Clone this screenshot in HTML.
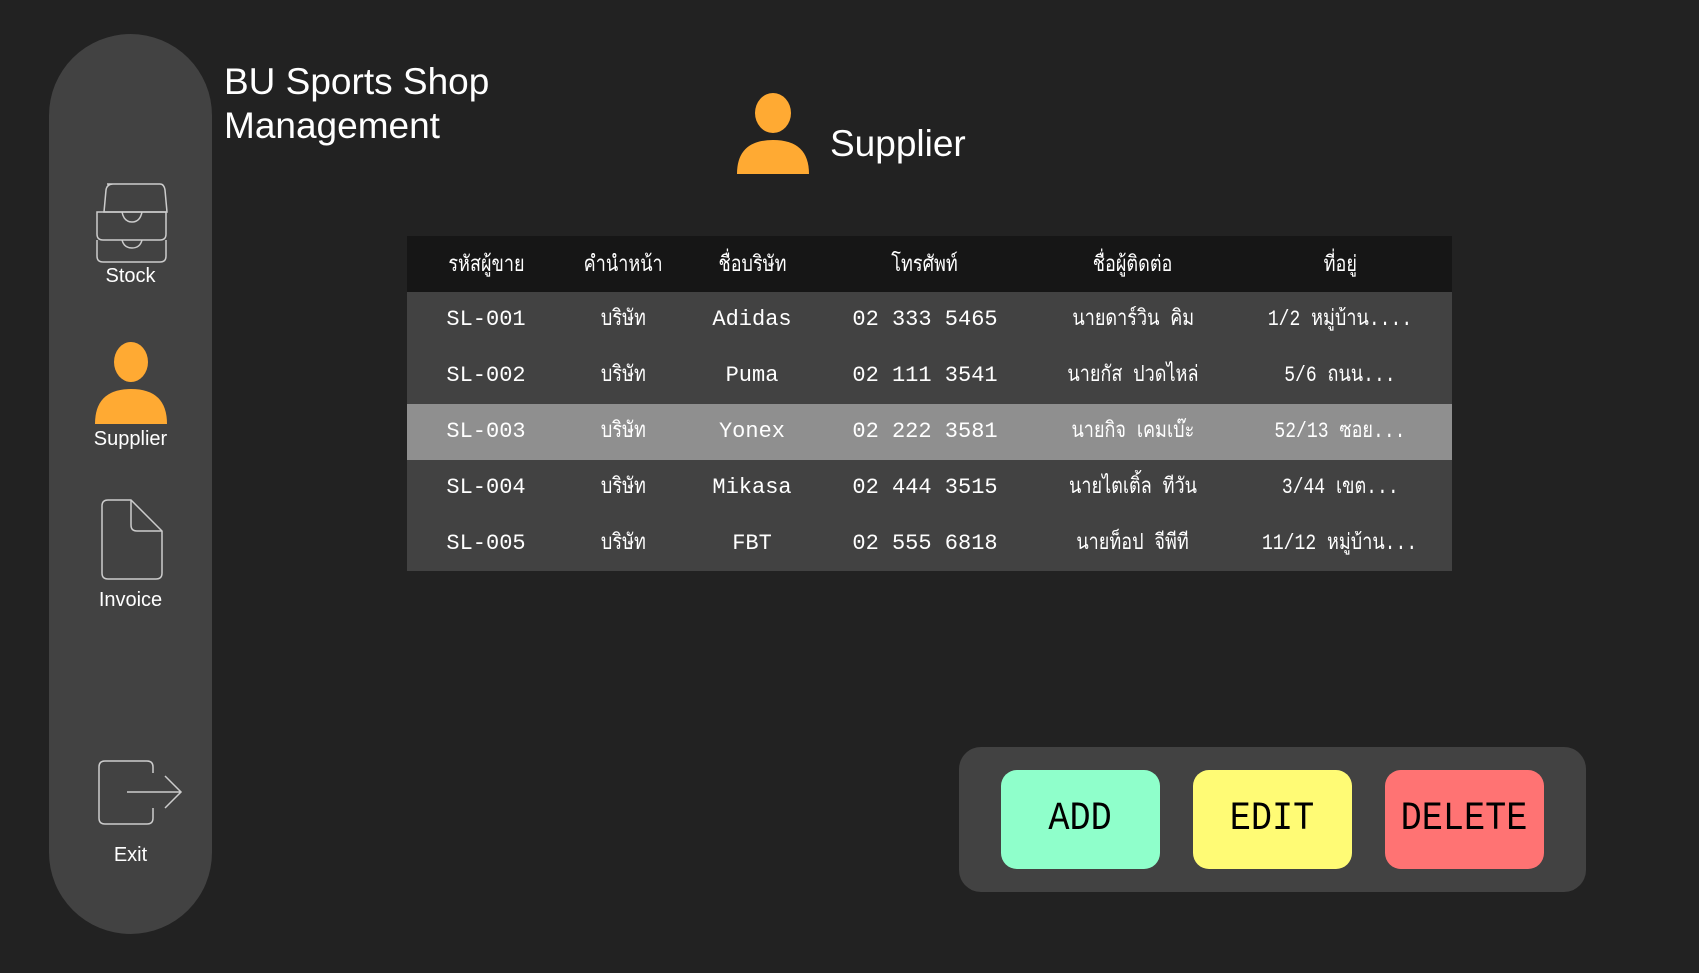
<!DOCTYPE html>
<html><head><meta charset="utf-8"><style>
*{margin:0;padding:0;box-sizing:border-box}
body{width:1699px;height:973px;background:#222;position:relative;overflow:hidden;font-family:"Liberation Sans","Noto Sans CJK SC",sans-serif;color:#fff}
.side{position:absolute;left:49px;top:34px;width:163px;height:900px;background:#424242;border-radius:82px}
.lbl{position:absolute;width:163px;left:49px;text-align:center;font-size:20px;color:#fff}
.title{position:absolute;left:224px;top:60px;font-size:37px;line-height:44px}
.tbl{position:absolute;left:407px;top:236px;width:1045px;height:335px;background:#424242}
.row{position:absolute;left:0;width:1045px;height:56px}
.c{position:absolute;top:0;height:56px;line-height:56px;text-align:center;width:240px;margin-left:-120px;font-family:"Liberation Mono","Noto Sans CJK SC",monospace;font-size:22px;white-space:nowrap}
.c span{display:inline-block;transform:scaleX(0.82)}
.h{font-family:"Liberation Sans","Noto Sans CJK SC",sans-serif}
.panel{position:absolute;left:959px;top:747px;width:627px;height:145px;background:#424242;border-radius:22px}
.btn{position:absolute;top:770px;width:159px;height:99px;border-radius:16px;color:#000;text-align:center;line-height:99px;font-family:"Liberation Mono",monospace;font-size:40px}
.btn span{display:inline-block;transform:scaleX(0.88)}
</style></head><body>
<div class="side"></div>
<svg style="position:absolute;left:0;top:0" width="240" height="973" fill="none" stroke="#ccc" stroke-width="1.5">
<path d="M107 184 H160 Q164 184 165 190 L167 212 H104 L106 190 Q107 184 113 184 Z"/>
<path d="M97 212 H166 V234 Q166 240 160 240 H103 Q97 240 97 234 Z"/>
<path d="M122 212 Q124 222 132 222 Q140 222 142 212"/>
<path d="M97 240 V256 Q97 262 103 262 H160 Q166 262 166 256 V240"/>
<path d="M122 240 Q124 248 132 248 Q140 248 142 240"/>
<path d="M108 500 H131 L162 531 V573 Q162 579 156 579 H108 Q102 579 102 573 V506 Q102 500 108 500 Z"/>
<path d="M131 500 V525 Q131 531 137 531 H162"/>
<path d="M153 773 V767 Q153 761 147 761 H105 Q99 761 99 767 V818 Q99 824 105 824 H147 Q153 824 153 818 V808"/>
<path d="M127 792 H181 M165 776 L181 792 L165 808"/>
</svg>
<svg style="position:absolute;left:93px;top:342px" width="76" height="82"><ellipse cx="38" cy="20" rx="17" ry="20" fill="#ffaa33"/><path d="M2 82 Q2 47 38 47 Q74 47 74 82 Z" fill="#ffaa33"/></svg>
<div class="lbl" style="top:265px">Stock</div>
<div class="lbl" style="top:428px">Supplier</div>
<div class="lbl" style="top:589px">Invoice</div>
<div class="lbl" style="top:844px">Exit</div>
<div class="title">BU Sports Shop<br>Management</div>
<svg style="position:absolute;left:736px;top:93px" width="75" height="81"><ellipse cx="37" cy="20" rx="18" ry="20" fill="#ffaa33"/><path d="M1 81 Q1 47 37 47 Q73 47 73 81 Z" fill="#ffaa33"/></svg>
<div style="position:absolute;left:830px;top:123px;font-size:37px">Supplier</div>
<div class="tbl">
<div class="row" style="top:0;background:#161616">
<div class="c h" style="left:79px"><span>รหัสผู้ขาย</span></div><div class="c h" style="left:216px"><span>คำนำหน้า</span></div><div class="c h" style="left:345px"><span>ชื่อบริษัท</span></div><div class="c h" style="left:518px"><span>โทรศัพท์</span></div><div class="c h" style="left:726px"><span>ชื่อผู้ติดต่อ</span></div><div class="c h" style="left:933px"><span>ที่อยู่</span></div></div>
<div class="row" style="top:56px"><div class="c" style="left:79px">SL-001</div><div class="c" style="left:216px"><span>บริษัท</span></div><div class="c" style="left:345px">Adidas</div><div class="c" style="left:518px">02 333 5465</div><div class="c" style="left:726px"><span>นายดาร์วิน คิม</span></div><div class="c" style="left:933px"><span>1/2 หมู่บ้าน....</span></div></div>
<div class="row" style="top:112px"><div class="c" style="left:79px">SL-002</div><div class="c" style="left:216px"><span>บริษัท</span></div><div class="c" style="left:345px">Puma</div><div class="c" style="left:518px">02 111 3541</div><div class="c" style="left:726px"><span>นายกัส ปวดไหล่</span></div><div class="c" style="left:933px"><span>5/6 ถนน...</span></div></div>
<div class="row" style="top:168px;background:#8f8f8f"><div class="c" style="left:79px">SL-003</div><div class="c" style="left:216px"><span>บริษัท</span></div><div class="c" style="left:345px">Yonex</div><div class="c" style="left:518px">02 222 3581</div><div class="c" style="left:726px"><span>นายกิจ เคมเบ๊ะ</span></div><div class="c" style="left:933px"><span>52/13 ซอย...</span></div></div>
<div class="row" style="top:224px"><div class="c" style="left:79px">SL-004</div><div class="c" style="left:216px"><span>บริษัท</span></div><div class="c" style="left:345px">Mikasa</div><div class="c" style="left:518px">02 444 3515</div><div class="c" style="left:726px"><span>นายไตเติ้ล ทีวัน</span></div><div class="c" style="left:933px"><span>3/44 เขต...</span></div></div>
<div class="row" style="top:280px"><div class="c" style="left:79px">SL-005</div><div class="c" style="left:216px"><span>บริษัท</span></div><div class="c" style="left:345px">FBT</div><div class="c" style="left:518px">02 555 6818</div><div class="c" style="left:726px"><span>นายท็อป จีพีที</span></div><div class="c" style="left:933px"><span>11/12 หมู่บ้าน...</span></div></div>
</div>
<div class="panel"></div>
<div class="btn" style="left:1001px;background:#8fffcb"><span>ADD</span></div>
<div class="btn" style="left:1193px;background:#fffb75"><span>EDIT</span></div>
<div class="btn" style="left:1385px;background:#ff7373"><span>DELETE</span></div>
</body></html>
